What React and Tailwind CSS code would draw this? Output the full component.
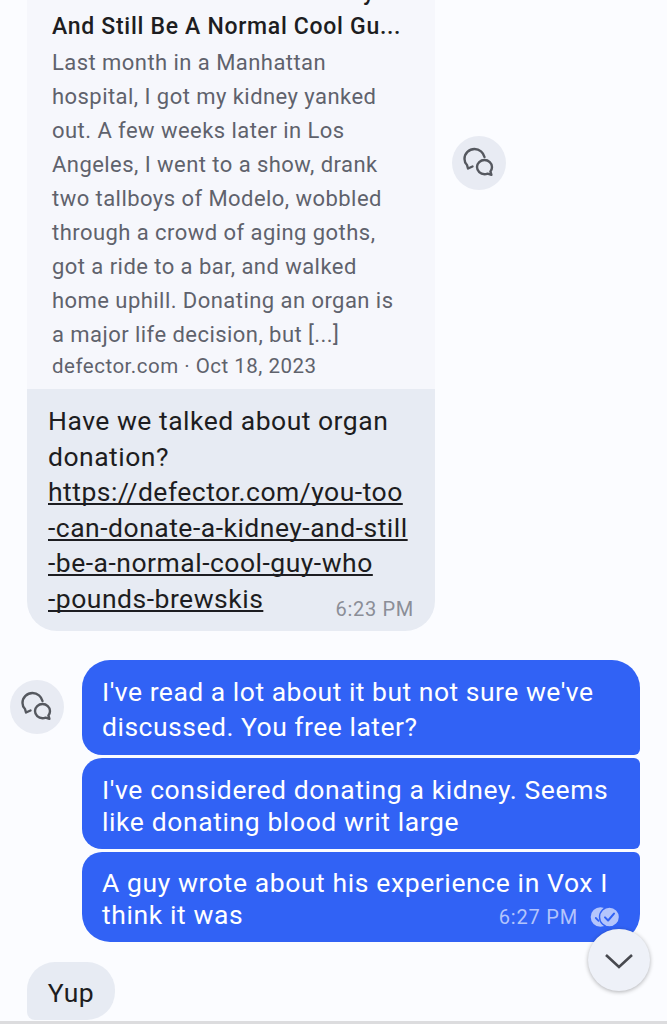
const ChatIcon = () => (
  <svg width="54" height="54" viewBox="0 0 54 54" fill="none" stroke="#55585f" strokeWidth="2.4" strokeLinecap="round" strokeLinejoin="round">
    <path d="M32.5 21C31.5 16.5 27.5 13 22.5 13C17 13 12.5 17.5 12.5 23C12.5 25.5 13.5 27.5 15 29L16 32.5L20.5 30.5" />
    <path d="M32.5 24C36.6 24 40 27.1 40 31C40 32.6 39.4 34.2 38.4 35.4L39.4 38.8L35.6 37.6C34.6 38 33.6 38.2 32.5 38.2C28.4 38.2 25 35 25 31C25 27.1 28.4 24 32.5 24Z" />
  </svg>
);

const ReadIcon = () => (
  <svg width="30" height="22" viewBox="0 0 30 22" fill="none">
    <circle cx="10.5" cy="11" r="9.8" fill="#b4c5fc" />
    <path d="M5.8 12L8.6 14.8" stroke="#3162f5" strokeWidth="1.8" strokeLinecap="round" />
    <circle cx="19.5" cy="11" r="10" fill="#b4c5fc" stroke="#3162f5" strokeWidth="1.4" />
    <path d="M15 11.4L18.1 14.5L24 7.6" stroke="#3162f5" strokeWidth="2" strokeLinecap="round" strokeLinejoin="round" />
  </svg>
);

const IconButton = ({ className = "" }) => (
  <div className={`flex h-[54px] w-[54px] shrink-0 items-center justify-center rounded-full bg-[#e8ebf3] ${className}`}>
    <ChatIcon />
  </div>
);

export default function App() {
  return (
    <div className="relative flex h-[1024px] w-[667px] flex-col overflow-hidden bg-[#fbfcff] font-['Roboto',sans-serif]">
      <div className="min-h-0 flex-1">
        <div className="mt-[-24px] flex items-start gap-[17px] pl-[27px]">
          <div className="w-[408px] shrink-0">
            <div className="bg-[#f6f7fc] pb-[9px] pl-[25px] pr-[20px]">
              <p className="whitespace-nowrap text-[23px] font-medium leading-[34px] tracking-[0.7px] text-[#1d1d21]">
                You Too Can Donate A Kidney
              </p>
              <p className="whitespace-nowrap text-[23px] font-medium leading-[34px] tracking-[0.7px] text-[#1d1d21]">
                And Still Be A Normal Cool Gu...
              </p>
              <p className="mt-[2px] text-[22px] leading-[34px] tracking-[0.45px] text-[#5f626c]">
                Last month in a Manhattan<br />
                hospital, I got my kidney yanked<br />
                out. A few weeks later in Los<br />
                Angeles, I went to a show, drank<br />
                two tallboys of Modelo, wobbled<br />
                through a crowd of aging goths,<br />
                got a ride to a bar, and walked<br />
                home uphill. Donating an organ is<br />
                a major life decision, but [...]
              </p>
              <p className="text-[20.5px] leading-[28px] tracking-[0.5px] text-[#5f626c]">defector.com · Oct 18, 2023</p>
            </div>
            <div className="relative rounded-b-[30px] bg-[#e7ebf3] pb-[14px] pl-[21px] pr-[20px] pt-[14px]">
              <p className="text-[26.5px] leading-[35.6px] tracking-[0.5px] text-[#1d1d21]">
                Have we talked about organ<br />
                donation?<br />
                <span className="underline [text-decoration-skip-ink:none]">
                  https://defector.com/you-too<br />
                  -can-donate-a-kidney-and-still<br />
                  -be-a-normal-cool-guy-who<br />
                  -pounds-brewskis
                </span>
              </p>
              <span className="absolute bottom-[10px] right-[21px] text-[20px] leading-[24px] tracking-[0.7px] text-[#8b8e97]">6:23 PM</span>
            </div>
          </div>
          <IconButton className="mt-[160px]" />
        </div>

        <div className="mt-[29px] flex flex-col items-end gap-[3px] pr-[27px]">
          <div className="flex items-center gap-[18px] self-stretch pl-[10px]">
            <IconButton />
            <div className="h-[95px] w-[558px] rounded-tl-[28px] rounded-tr-[28px] rounded-bl-[20px] rounded-br-[6px] bg-[#3162f5] px-[20px] pt-[14px] text-[26.5px] leading-[35px] tracking-[0.5px] text-white">
              I've read a lot about it but not sure we've discussed. You free later?
            </div>
          </div>
          <div className="h-[91px] w-[558px] rounded-l-[20px] rounded-r-[6px] bg-[#3162f5] px-[20px] pt-[16px] text-[26.5px] leading-[32px] tracking-[0.6px] text-white">
            I've considered donating a kidney. Seems like donating blood writ large
          </div>
          <div className="relative h-[90px] w-[558px] rounded-tl-[20px] rounded-tr-[6px] rounded-b-[28px] bg-[#3162f5] px-[20px] pt-[15px] text-[26.5px] leading-[32px] tracking-[0.6px] text-white">
            A guy wrote about his experience in Vox I think it was
            <div className="absolute bottom-[13px] right-[20px] flex items-center gap-[12px]">
              <span className="text-[20px] leading-[24px] tracking-[0.8px] text-[#b3c4fc]">6:27 PM</span>
              <ReadIcon />
            </div>
          </div>
        </div>

        <div className="ml-[27px] mt-[20px] flex h-[58px] w-[88px] items-center justify-center rounded-[28px] rounded-bl-[8px] bg-[#e7ebf3] pt-[4px] text-[26.5px] tracking-[0.6px] text-[#1d1d21]">
          Yup
        </div>
      </div>
      <div className="h-[3px] shrink-0 bg-[#dcdcde]" />
      <div className="absolute left-[588px] top-[929px] flex h-[62px] w-[62px] items-center justify-center rounded-full bg-[#eef1f8] shadow-[0_1px_4px_rgba(0,0,0,0.3)]">
        <svg width="30" height="20" viewBox="0 0 30 20" fill="none" stroke="#47494f" strokeWidth="2.6">
          <path d="M2 5L15 17L28 5" />
        </svg>
      </div>
    </div>
  );
}
